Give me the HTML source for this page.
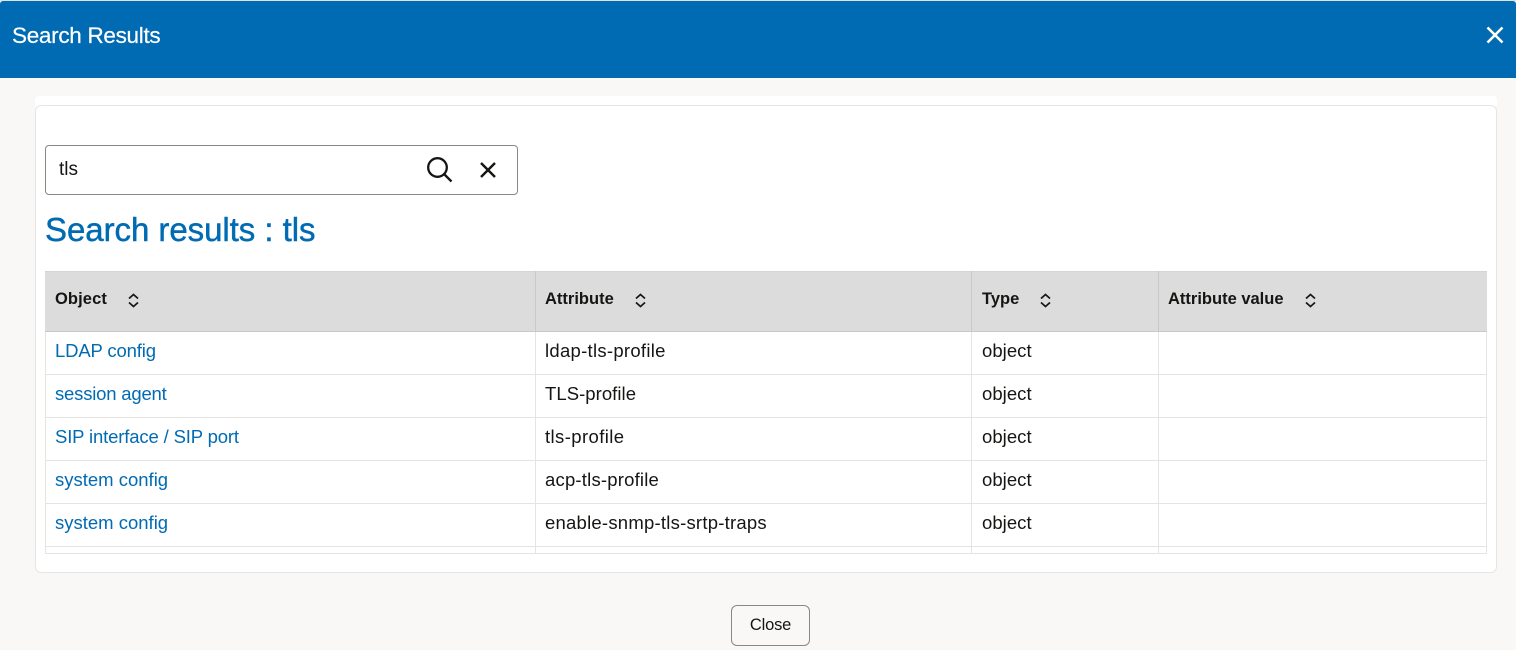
<!DOCTYPE html>
<html lang="en"><head><meta charset="utf-8"><title>Search Results</title>
<style>
html,body{margin:0;padding:0;width:1516px;height:650px;overflow:hidden;background:#f9f8f6;font-family:"Liberation Sans",sans-serif;color:#161513}
.a{position:absolute;white-space:nowrap}
#hdr{left:0;top:1px;width:1516px;height:77px;background:#006bb3;border-radius:3px 3px 0 0}
#top{left:0;top:0;width:1516px;height:1px;background:#dfe3e6}
#strip{left:35px;top:96px;width:1462px;height:12px;background:#fff;border-radius:4px}
#card{left:35px;top:105px;width:1460px;height:466px;background:#fff;border:1px solid #e6e5e3;border-radius:6px}
#input{left:45px;top:145px;width:471px;height:48px;border:1px solid #8a8886;border-radius:4px;background:#fff}
.h{top:271px;height:60px;background:#dcdcdc}
.th{top:290px;font-size:16.500px;font-weight:bold;line-height:18px}
.td{font-size:18.500px;line-height:22px}
.l{color:#006bb3}
.hl{left:45px;width:1442px;height:1px;background:#e5e4e2}
.vl{width:1px;background:#e5e4e2;top:332px;height:221px}
.vh{width:1px;background:#c9c9c9;top:271px;height:60px}
</style></head><body>
<div class="a" id="top"></div>
<div class="a" id="hdr"></div>
<div class="a" style="left:12px;top:22px;font-size:22.5px;line-height:28px;color:#fff;letter-spacing:-.3px;-webkit-text-stroke:.2px #fff">Search Results</div>
<svg class="a" style="left:1486px;top:26px" width="18" height="18" viewBox="0 0 18 18"><path d="M1.5 1.500L16.500 16.500M16.500 1.500L1.500 16.500" stroke="#fff" stroke-width="2.600" fill="none"/></svg>
<div class="a" id="strip"></div>
<div class="a" id="card"></div>
<div class="a" id="input"></div>
<div class="a" style="left:59px;top:159px;font-size:19px;line-height:22px">tls</div>
<svg class="a" style="left:426px;top:156px" width="28" height="28" viewBox="0 0 28 28"><circle cx="11.500" cy="11.500" r="9.300" stroke="#161513" stroke-width="2.300" fill="none"/><path d="M18 18L25.500 25.500" stroke="#161513" stroke-width="2.300" fill="none"/></svg>
<svg class="a" style="left:479px;top:161px" width="18" height="18" viewBox="0 0 18 18"><path d="M2 2L16 16M16 2L2 16" stroke="#161513" stroke-width="2.400" fill="none"/></svg>
<div class="a" style="left:45px;top:210px;font-size:33px;line-height:40px;color:#006bb3;letter-spacing:-.05px;-webkit-text-stroke:.45px #006bb3">Search results : tls</div>

<div class="a h" style="left:45px;width:1442px"></div>
<div class="a hl" style="top:271px;background:#d4d4d4"></div>
<div class="a hl" style="top:331px;background:#c9c9c9"></div>
<div class="a vh" style="left:535px"></div>
<div class="a vh" style="left:971px"></div>
<div class="a vh" style="left:1158px"></div>
<div class="a th" style="left:55px;letter-spacing:.1px">Object</div>
<div class="a th" style="left:545px">Attribute</div>
<div class="a th" style="left:982px">Type</div>
<div class="a th" style="left:1168px">Attribute value</div>
<svg class="a" style="left:127px;top:293px" width="13" height="15" viewBox="0 0 13 15"><path d="M2 5.500L6.500 1.500L11 5.500M2 9.500L6.500 13.500L11 9.500" stroke="#161513" stroke-width="1.700" fill="none"/></svg>
<svg class="a" style="left:634px;top:293px" width="13" height="15" viewBox="0 0 13 15"><path d="M2 5.500L6.500 1.500L11 5.500M2 9.500L6.500 13.500L11 9.500" stroke="#161513" stroke-width="1.700" fill="none"/></svg>
<svg class="a" style="left:1039px;top:293px" width="13" height="15" viewBox="0 0 13 15"><path d="M2 5.500L6.500 1.500L11 5.500M2 9.500L6.500 13.500L11 9.500" stroke="#161513" stroke-width="1.700" fill="none"/></svg>
<svg class="a" style="left:1304px;top:293px" width="13" height="15" viewBox="0 0 13 15"><path d="M2 5.500L6.500 1.500L11 5.500M2 9.500L6.500 13.500L11 9.500" stroke="#161513" stroke-width="1.700" fill="none"/></svg>

<div class="a vl" style="left:45px"></div>
<div class="a vl" style="left:535px"></div>
<div class="a vl" style="left:971px"></div>
<div class="a vl" style="left:1158px"></div>
<div class="a vl" style="left:1486px"></div>
<div class="a hl" style="top:374px"></div>
<div class="a hl" style="top:417px"></div>
<div class="a hl" style="top:460px"></div>
<div class="a hl" style="top:503px"></div>
<div class="a hl" style="top:546px"></div>
<div class="a hl" style="top:553px"></div>

<div class="a td l" style="left:55px;top:340px;letter-spacing:-.15px">LDAP config</div>
<div class="a td" style="left:545px;top:340px;letter-spacing:.28px">ldap-tls-profile</div>
<div class="a td" style="left:982px;top:340px;letter-spacing:.05px">object</div>
<div class="a td l" style="left:55px;top:383px;letter-spacing:-.2px">session agent</div>
<div class="a td" style="left:545px;top:383px;letter-spacing:.05px">TLS-profile</div>
<div class="a td" style="left:982px;top:383px;letter-spacing:.05px">object</div>
<div class="a td l" style="left:55px;top:426px;letter-spacing:-.15px">SIP interface / SIP port</div>
<div class="a td" style="left:545px;top:426px;letter-spacing:.4px">tls-profile</div>
<div class="a td" style="left:982px;top:426px;letter-spacing:.05px">object</div>
<div class="a td l" style="left:55px;top:469px">system config</div>
<div class="a td" style="left:545px;top:469px;letter-spacing:.2px">acp-tls-profile</div>
<div class="a td" style="left:982px;top:469px;letter-spacing:.05px">object</div>
<div class="a td l" style="left:55px;top:512px">system config</div>
<div class="a td" style="left:545px;top:512px;letter-spacing:.23px">enable-snmp-tls-srtp-traps</div>
<div class="a td" style="left:982px;top:512px;letter-spacing:.05px">object</div>

<div class="a" style="left:731px;top:605px;width:77px;height:39px;border:1px solid #8a8886;border-radius:6px;text-align:center;font-size:16.500px;line-height:38px;letter-spacing:-.2px">Close</div>
</body></html>
